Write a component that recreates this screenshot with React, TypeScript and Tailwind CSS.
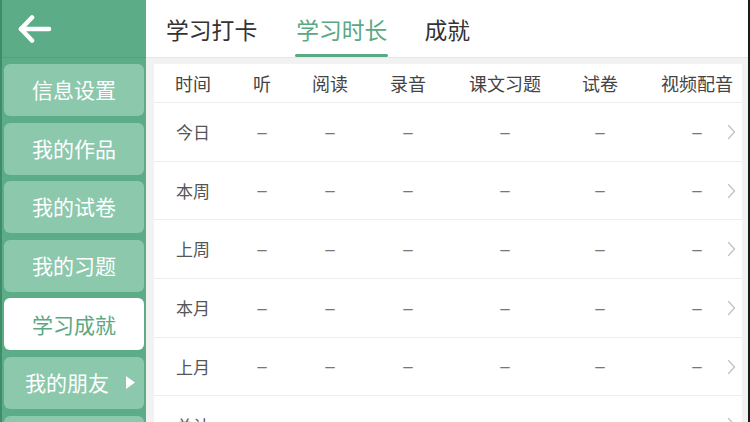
const menu = ['信息设置', '我的作品', '我的试卷', '我的习题', '学习成就', '我的朋友', '我的设置'];
const active = '学习成就';

const cols = [
  { label: '时间', w: 'w-[78px]' },
  { label: '听', w: 'w-[60px]' },
  { label: '阅读', w: 'w-[76px]' },
  { label: '录音', w: 'w-[80px]' },
  { label: '课文习题', w: 'w-[114px]' },
  { label: '试卷', w: 'w-[76px]' },
];

const rows = ['今日', '本周', '上周', '本月', '上月', '总计'];

function Chevron() {
  return (
    <svg width="9" height="16" viewBox="0 0 9 16" fill="none">
      <polyline points="1.5,1.5 7.5,8 1.5,14.5" stroke="#c4c4c4" strokeWidth="1.4" strokeLinecap="round" strokeLinejoin="round" />
    </svg>
  );
}

function Dash() {
  return <span className="text-[17px] text-[#777]" style={{ fontFamily: '"Liberation Sans", sans-serif' }}>–</span>;
}

export default function App() {
  return (
    <div
      className="w-[750px] h-[422px] overflow-hidden flex bg-[#f2f2f2]"
      style={{ fontFamily: '"Noto Sans CJK SC", "Noto Sans", sans-serif' }}
    >
      {/* sidebar */}
      <div className="w-[146px] h-full flex flex-col bg-[#5dac88] border-l-2 border-[#3f8c69] shrink-0">
        <div className="h-[58px] shrink-0 border-b border-[#54a07e] flex items-center pl-[16px]">
          <svg width="34" height="30" viewBox="0 0 34 30" fill="none">
            <line x1="3" y1="15" x2="31" y2="15" stroke="white" strokeWidth="4.6" strokeLinecap="round" />
            <polyline points="14,3.5 3,15 14,26.5" stroke="white" strokeWidth="4.6" strokeLinecap="round" strokeLinejoin="round" />
          </svg>
        </div>
        <div className="flex flex-col gap-[6.6px] pt-[6px] pl-[2px] pr-[2px]">
          {menu.map((m) => {
            const on = m === active;
            return (
              <div
                key={m}
                className={`h-[52px] shrink-0 rounded-[6px] flex items-center text-[21px] ${
                  on ? 'bg-white text-[#5aa884]' : 'bg-[#8bc8ac] text-white'
                } ${m === '我的朋友' ? 'pl-[21px] pr-[9px] justify-between' : 'justify-center'}`}
              >
                <span>{m}</span>
                {m === '我的朋友' && (
                  <svg width="9" height="13" viewBox="0 0 9 13">
                    <polygon points="0,0 9,6.5 0,13" fill="white" />
                  </svg>
                )}
              </div>
            );
          })}
        </div>
      </div>

      {/* main */}
      <div className="flex-1 flex flex-col">
        <div className="h-[58px] bg-white border-b border-[#e6e6e6] flex items-end pl-[20px] shrink-0">
          <div className="h-[46px] pb-[8px] flex items-center text-[22.8px] text-[#333] leading-none">学习打卡</div>
          <div className="relative ml-[39px] h-[46px] pb-[8px] flex items-center text-[22.8px] text-[#5aa884] leading-none">
            学习时长
            <div className="absolute left-[-1px] right-[-1px] bottom-0 h-[3px] rounded-full bg-[#5aa884]" />
          </div>
          <div className="ml-[37px] h-[46px] pb-[8px] flex items-center text-[22.8px] text-[#333] leading-none">成就</div>
        </div>

        <div className="flex-1 pt-[6px] pl-[8px] pr-[6px] flex">
          <div className="w-[588px] bg-white flex flex-col">
            <div className="h-[39px] flex items-center border-b border-[#eeeeee] text-[18px] text-[#444] shrink-0">
              {cols.map((c) => (
                <div key={c.label} className={`${c.w} text-center`}>{c.label}</div>
              ))}
              <div className="w-[14px]" />
              <div className="w-[90px] text-center">视频配音</div>
            </div>
            {rows.map((r) => (
              <div key={r} className="h-[58.7px] flex items-center border-b border-[#eeeeee] relative shrink-0">
                <div className="w-[78px] text-center text-[17px] text-[#555]">{r}</div>
                {cols.slice(1).map((c) => (
                  <div key={c.label} className={`${c.w} text-center`}><Dash /></div>
                ))}
                <div className="w-[14px]" />
                <div className="w-[90px] text-center"><Dash /></div>
                <div className="absolute right-[6px] top-1/2 -translate-y-1/2 flex">
                  <Chevron />
                </div>
              </div>
            ))}
          </div>
        </div>
      </div>
      <div className="w-[3px] h-full bg-[#1a1a1a] shrink-0" />
    </div>
  );
}
